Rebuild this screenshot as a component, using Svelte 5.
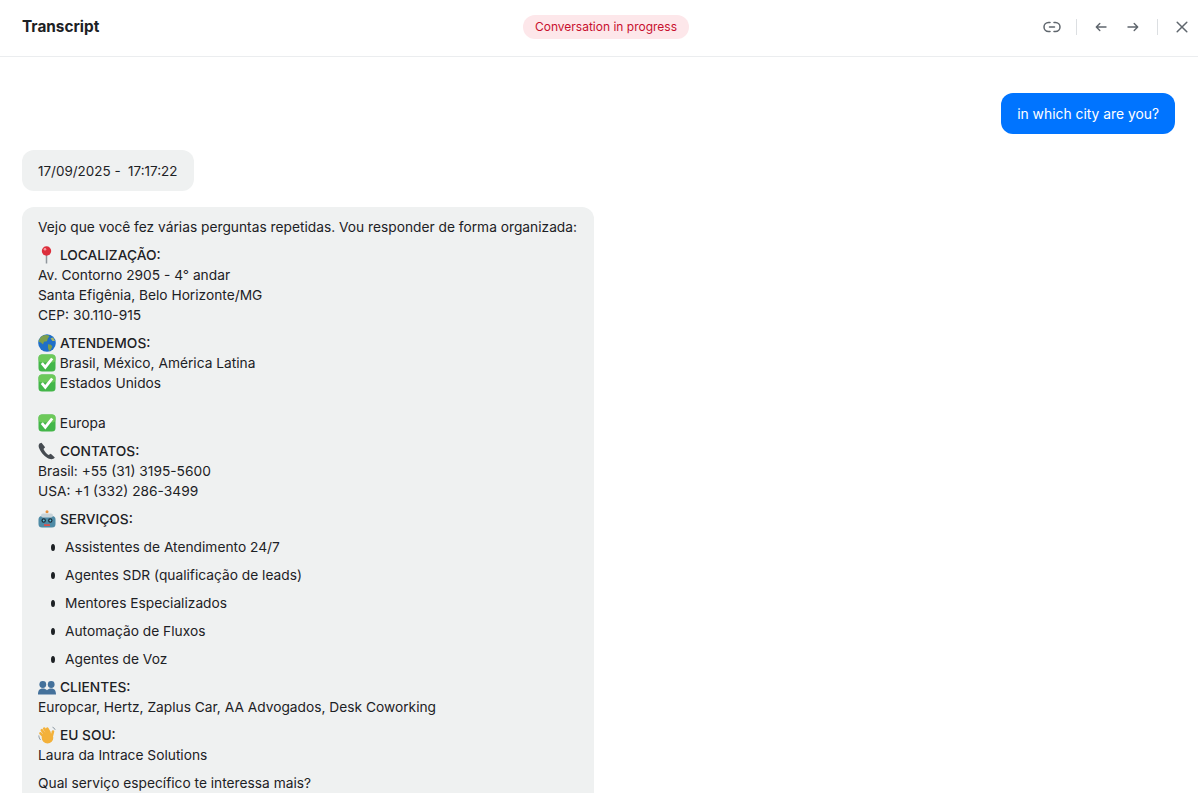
<script>
	const services = [
		'Assistentes de Atendimento 24/7',
		'Agentes SDR (qualificação de leads)',
		'Mentores Especializados',
		'Automação de Fluxos',
		'Agentes de Voz'
	];
</script>

{#snippet check()}
	<svg class="emoji" viewBox="0 0 18 18" role="img" aria-label="check">
		<rect x="0.5" y="0.5" width="17" height="17" rx="3.5" fill="#43b649" />
		<rect x="0.5" y="0.5" width="17" height="8" rx="3.5" fill="#6cc95a" />
		<path d="M3.8 9.2l3.5 4 6.900-8.700" fill="none" stroke="#fff" stroke-width="2.8" />
	</svg>
{/snippet}

<div class="panel">
	<header class="topbar">
		<h1>Transcript</h1>
		<span class="status">Conversation in progress</span>
		<div class="actions">
			<button aria-label="Copy link">
				<svg width="18" height="12" viewBox="0 0 18 12" fill="none" stroke="#5f666d" stroke-width="1.500" stroke-linecap="round">
					<path d="M7 1.500H5.500a4.500 4.500 0 0 0 0 9H7M11 1.500h1.500a4.500 4.500 0 0 1 0 9H11M6.500 6h5" />
				</svg>
			</button>
			<span class="divider"></span>
			<div class="nav">
				<button aria-label="Previous">
					<svg width="12" height="10" viewBox="0 0 12 10" fill="none" stroke="#5f666d" stroke-width="1.400" stroke-linecap="round" stroke-linejoin="round">
						<path d="M11 5H1.500M4.800 1.500 1.300 5l3.500 3.500" />
					</svg>
				</button>
				<button aria-label="Next">
					<svg width="12" height="10" viewBox="0 0 12 10" fill="none" stroke="#5f666d" stroke-width="1.400" stroke-linecap="round" stroke-linejoin="round">
						<path d="M1 5h9.500M7.200 1.500 10.700 5l-3.500 3.500" />
					</svg>
				</button>
			</div>
			<span class="divider"></span>
			<button aria-label="Close">
				<svg width="12" height="12" viewBox="0 0 12 12" fill="none" stroke="#5f666d" stroke-width="1.500" stroke-linecap="round">
					<path d="M1.200 1.200l9.600 9.600M10.800 1.200l-9.600 9.600" />
				</svg>
			</button>
		</div>
	</header>

	<main class="messages">
		<div class="bubble user">in which city are you?</div>
		<div class="bubble date">17/09/2025 -&nbsp; 17:17:22</div>
		<div class="bubble long">
			<p>Vejo que você fez várias perguntas repetidas. Vou responder de forma organizada:</p>
			<p>
				<svg class="emoji" viewBox="0 0 18 18" role="img" aria-label="pin">
					<path d="M8.500 8v9.500" stroke="#8f969c" stroke-width="1.500" />
					<circle cx="8.500" cy="5" r="4.700" fill="#dc2f3c" />
					<circle cx="7" cy="3.300" r="1.300" fill="#f79aa0" />
				</svg>
				<b>LOCALIZAÇÃO:</b><br />
				Av. Contorno 2905 - 4° andar<br />
				Santa Efigênia, Belo Horizonte/MG<br />
				CEP: 30.110-915
			</p>
			<p>
				<svg class="emoji" viewBox="0 0 18 18" role="img" aria-label="globe">
					<circle cx="9" cy="9" r="8.800" fill="#1f6fc9" />
					<path d="M5 1.500c2.500-1 5-.7 6.500.5L9.800 4.500 9 7.200l-3 .6-1 2.700-2.200-2L.6 7.800C1 5 2.800 2.700 5 1.500zM10 10.200l3 .5 1.300 1.800-1.600 3.300-1.700 1.200-1-3.200z" fill="#7d9f4c" />
					<path d="M12.500 4.200l2.500-.8 2 3.500-2.600.2z" fill="#a9b765" />
				</svg>
				<b>ATENDEMOS:</b><br />
				{@render check()} Brasil, México, América Latina<br />
				{@render check()} Estados Unidos<br />
				<br />
				{@render check()} Europa
			</p>
			<p>
				<svg class="emoji" viewBox="0 0 18 18" role="img" aria-label="phone">
					<path d="M1.500 1.500C.2 3 .5 5 1.500 7c1.900 4 5.500 8 9.500 9.700 2.300.9 4.700.6 5.800-1.200l-4-3.800-2.300 1.200C8.700 11.900 6.400 9.300 5.500 7l1.600-1.700L3.500.8z" fill="#454b51" />
				</svg>
				<b>CONTATOS:</b><br />
				Brasil: +55 (31) 3195-5600<br />
				USA: +1 (332) 286-3499
			</p>
			<p>
				<svg class="emoji" viewBox="0 0 18 18" role="img" aria-label="robot">
					<circle cx="9" cy="1.800" r="1.500" fill="#e8913d" />
					<rect x="0.500" y="6" width="17" height="11.500" rx="3.500" fill="#4f8ba6" />
					<rect x="3" y="3.500" width="12" height="4" rx="2" fill="#c9d4d9" />
					<circle cx="5.700" cy="10.500" r="2.200" fill="#1e2f3a" />
					<circle cx="12.300" cy="10.500" r="2.200" fill="#1e2f3a" />
					<circle cx="5.700" cy="10.500" r="1" fill="#63c8e8" />
					<circle cx="12.300" cy="10.500" r="1" fill="#63c8e8" />
					<rect x="6" y="14.200" width="6" height="1.800" fill="#d9534f" />
				</svg>
				<b>SERVIÇOS:</b>
			</p>
			<ul>
				{#each services as service}
					<li>{service}</li>
				{/each}
			</ul>
			<p>
				<svg class="emoji" viewBox="0 0 18 18" role="img" aria-label="people">
					<g fill="#44719b">
						<circle cx="4.800" cy="6.500" r="3.400" />
						<circle cx="13.200" cy="6.500" r="3.400" />
						<path d="M0 16.500c0-4 1.500-6 4.800-6 1.700 0 3.200.6 4.200 1.800 1-1.200 2.500-1.800 4.200-1.800 3.300 0 4.800 2 4.800 6z" />
					</g>
				</svg>
				<b>CLIENTES:</b><br />
				Europcar, Hertz, Zaplus Car, AA Advogados, Desk Coworking
			</p>
			<p>
				<svg class="emoji" viewBox="0 0 18 18" role="img" aria-label="wave">
					<g stroke="#f3b13a" stroke-width="2.600" stroke-linecap="round" fill="none">
						<path d="M4.500 9.500 2.500 7.300M6.500 7.800 3.800 4.200M9 6.700 6.200 2.600M11.500 6.500 9.300 2.600" />
						<path d="M14 9.500l1-4" />
					</g>
					<ellipse cx="9.500" cy="11.800" rx="5.800" ry="5.700" fill="#f3b13a" />
					<path d="M.8 9.500c.1 1.800.7 3.300 1.800 4.500M14.500 1.200c1.300.4 2.200 1.300 2.700 2.600" stroke="#8d9aa4" stroke-width="1" fill="none" />
				</svg>
				<b>EU SOU:</b><br />
				Laura da Intrace Solutions
			</p>
			<p>Qual serviço específico te interessa mais?</p>
		</div>
	</main>
</div>

<style>
	:global(body) {
		margin: 0;
		background: #fff;
	}

	.panel {
		height: 793px;
		overflow: hidden;
		font-family: Inter, 'Noto Sans', sans-serif;
		font-size: 13.75px;
		line-height: 20px;
		color: #1d2125;
	}

	.topbar {
		display: grid;
		grid-template-columns: 1fr auto 1fr;
		align-items: center;
		height: 54px;
		padding: 0 4px 2px 18px;
		border-bottom: 1px solid #ebedef;
	}

	h1 {
		margin: 0 0 0 4px;
		font-size: 15.35px;
		font-weight: 700;
	}

	.status {
		padding: 2px 12px;
		border-radius: 12px;
		background: #fde7ea;
		color: #c8102e;
		font-size: 12px;
	}

	.actions {
		display: flex;
		align-items: center;
		justify-content: flex-end;
		gap: 12px;
	}

	.nav {
		display: flex;
		gap: 8px;
	}

	button {
		display: flex;
		align-items: center;
		justify-content: center;
		width: 24px;
		height: 24px;
		padding: 0;
		border: 0;
		background: none;
	}

	.divider {
		width: 1px;
		height: 16px;
		background: #dcdfe2;
	}

	.messages {
		display: flex;
		flex-direction: column;
		align-items: flex-start;
		gap: 16px;
		padding: 36px 23px 0 22px;
	}

	.bubble {
		padding: 10.5px 16px;
		border-radius: 12px;
		background: #eff1f1;
	}

	.user {
		align-self: flex-end;
		background: #0074ff;
		color: #fff;
		font-size: 13.85px;
	}

	.date {
		font-size: 13.45px;
	}

	.long {
		width: 540px;
		padding-top: 10px;
	}

	p {
		margin: 0 0 8px;
	}

	b {
		font-weight: 500;
	}

	ul {
		margin: 0 0 8px;
		padding: 0 0 0 13px;
		list-style: none;
	}

	li {
		display: flex;
		align-items: center;
		gap: 10px;
		margin-bottom: 8px;
	}

	li::before {
		content: '';
		width: 4px;
		height: 7px;
		border-radius: 50%;
		background: #1d2125;
	}

	.emoji {
		width: 18px;
		height: 18px;
		vertical-align: -4px;
	}
</style>
